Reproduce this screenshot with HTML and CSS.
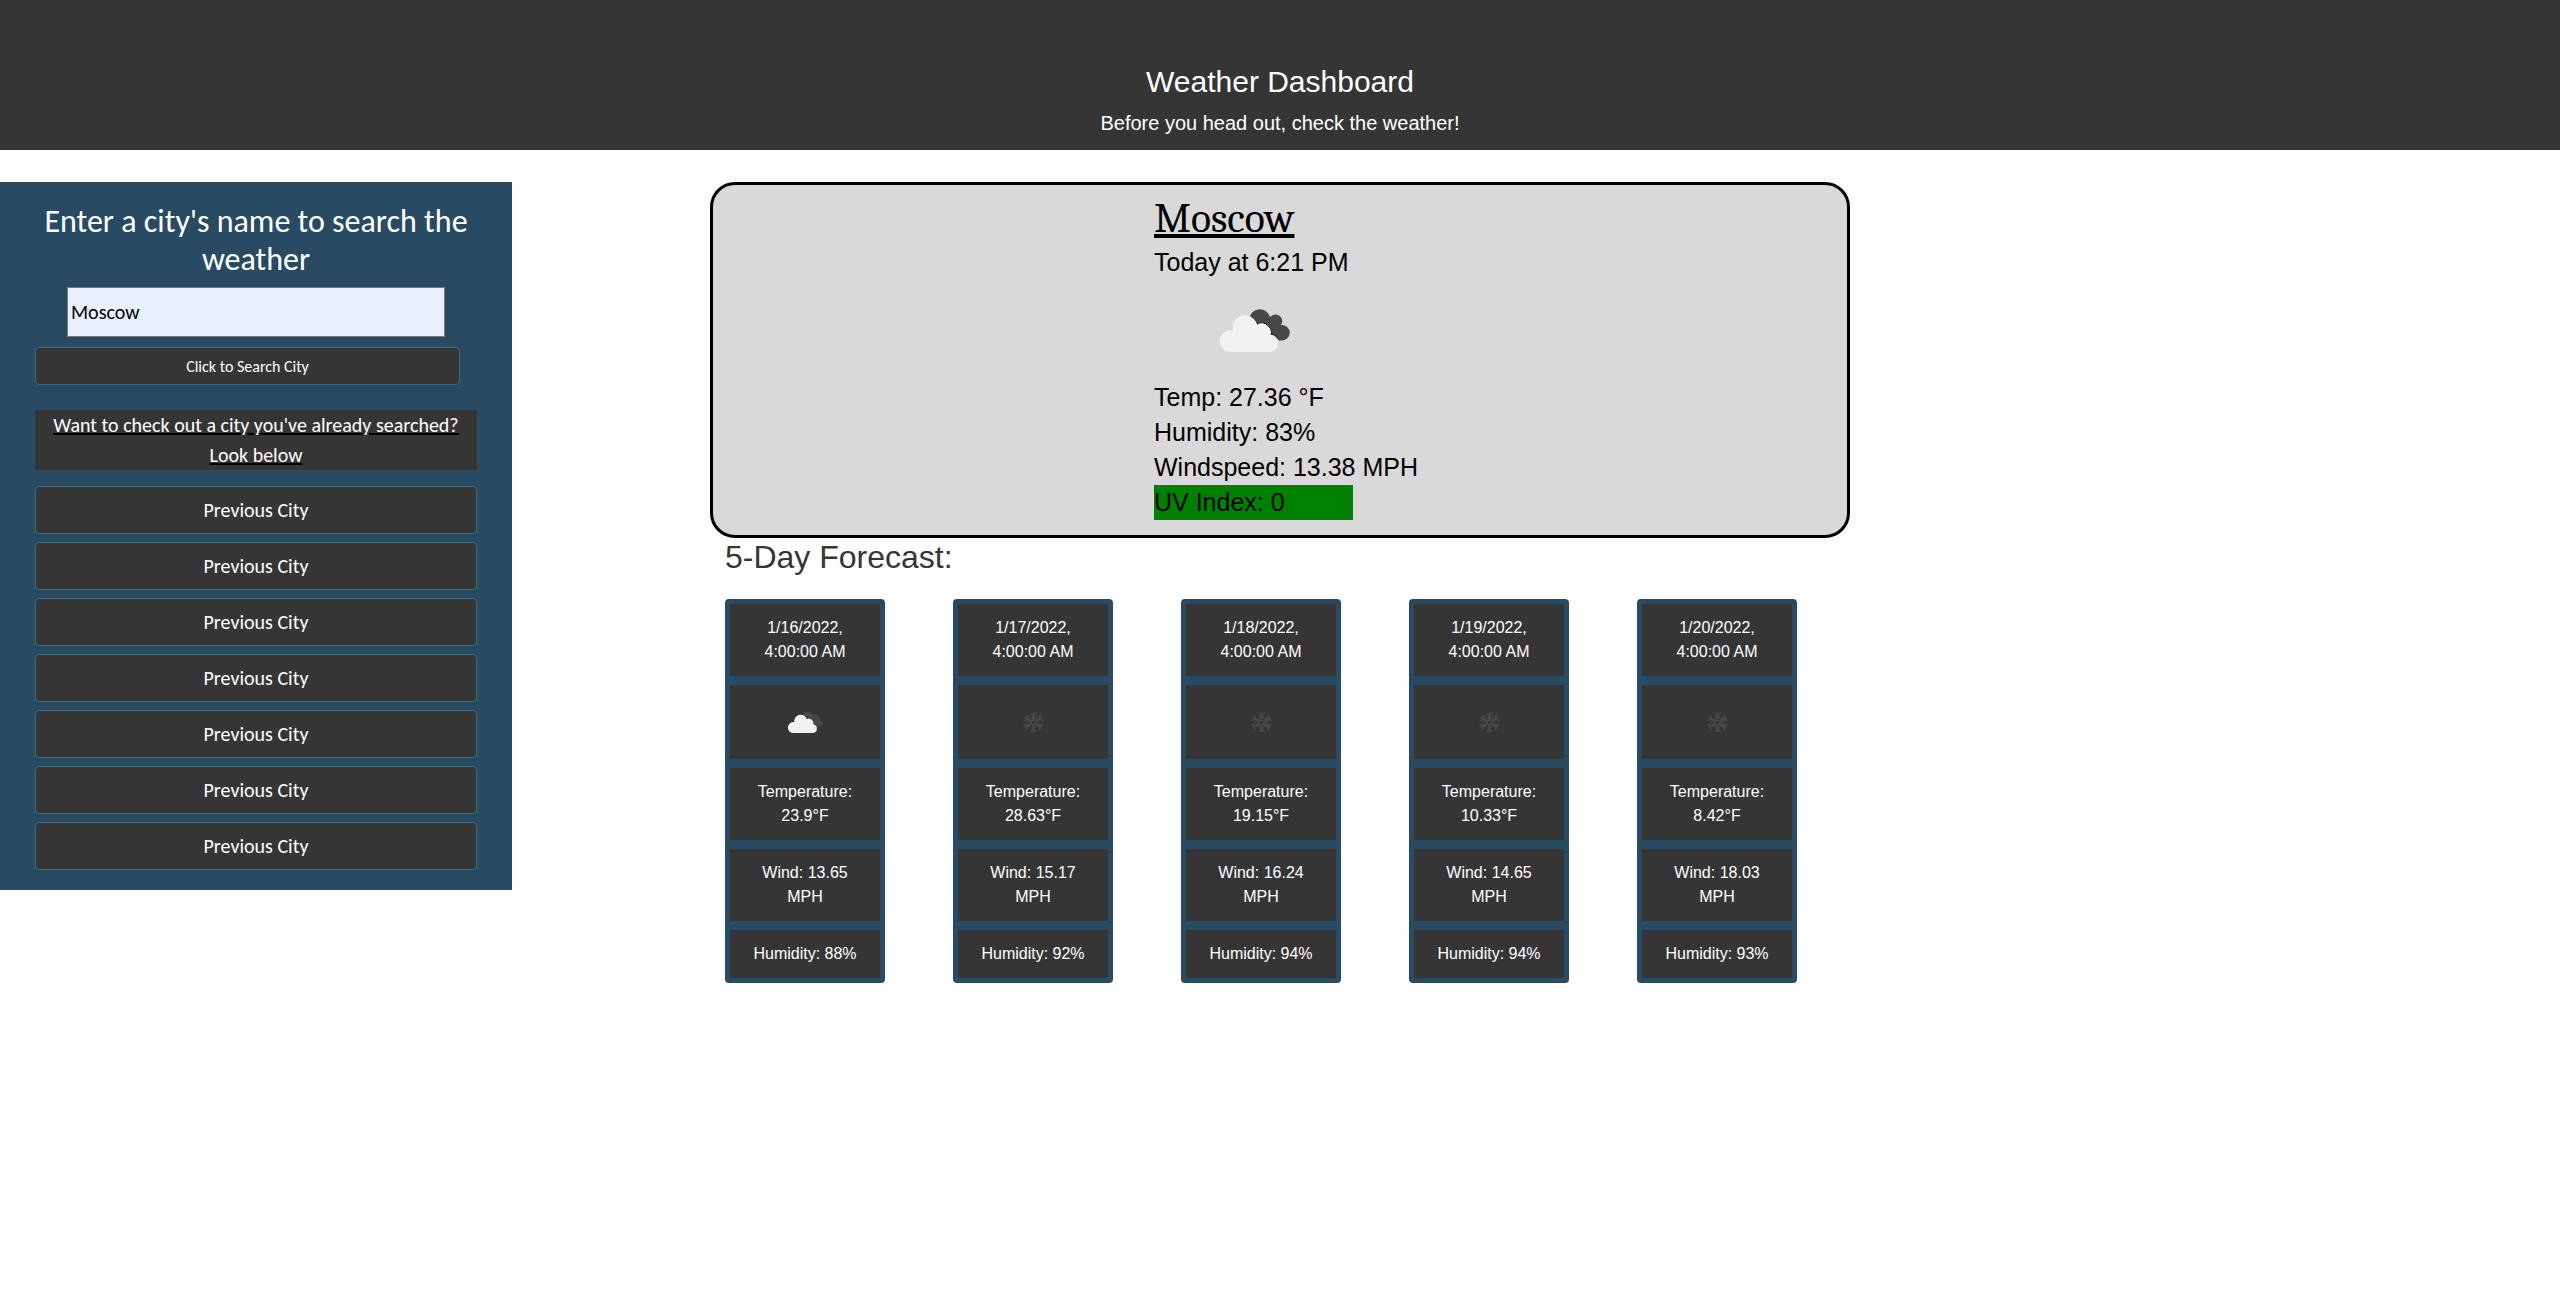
FILE: index.html
```html
<!DOCTYPE html>
<html lang="en">
<head>
<meta charset="utf-8">
<title>Weather Dashboard</title>
<link rel="stylesheet" href="styles.css">
</head>
<body>
<svg class="defs" width="0" height="0" aria-hidden="true">
  <symbol id="clouds" viewBox="0 0 100 100">
    <path class="cloud-back" d="M45.500 39a10.400 10.400 0 0 1 20.500-1.800a6.300 6.300 0 0 1 10.900 8a7.700 7.700 0 1 1 -.2 15.200L60 58z"/>
    <path class="cloud-shade" d="M46.500 36.900a12.500 12.500 0 0 1 7.200 7.800a8.600 8.600 0 0 1 12.900 9.800a8.700 8.700 0 0 1 8.600 6"/>
    <path class="cloud-front" d="M26.700 72a10.900 10.900 0 0 1 0-21.800q1 0 2 .2q-.2-1.200-.2-2.700a12.500 12.500 0 0 1 24.700-2.600a8.600 8.600 0 0 1 12.900 9.800a8.700 8.700 0 0 1 .9 17.100z"/>
    <path class="cloud-rim" d="M46 37.700a12.500 12.500 0 0 1 6.700 7.800a8.600 8.600 0 0 1 12.900 9.800a8.700 8.700 0 0 1 8.600 6"/>
  </symbol>
  <symbol id="snow" viewBox="0 0 50 50">
    <g class="flake">
      <g id="arm"><path d="M25.500 22.500V15M22.300 15.800l3.200 3.200 3.200-3.200M23.400 19.600l2.100 2 2.100-2"/></g>
      <use href="#arm" transform="rotate(60 25.500 25.500)"/>
      <use href="#arm" transform="rotate(120 25.500 25.500)"/>
      <use href="#arm" transform="rotate(180 25.500 25.500)"/>
      <use href="#arm" transform="rotate(240 25.500 25.500)"/>
      <use href="#arm" transform="rotate(300 25.500 25.500)"/>
      <circle cx="25.500" cy="25.500" r="2.600"/>
    </g>
  </symbol>
</svg>

<header class="header">
  <h1 class="header-title">Weather Dashboard</h1>
  <p class="header-tagline">Before you head out, check the weather!</p>
</header>

<main class="layout">
  <aside class="sidebar">
    <h2 class="sidebar-title">Enter a city's name to search the weather</h2>
    <input class="city-input" type="text" value="Moscow" aria-label="City">
    <button class="btn btn-search" type="button">Click to Search City</button>
    <p class="history-title">Want to check out a city you've already searched? Look below</p>
    <div class="history">
      <button class="btn btn-city" type="button">Previous City</button>
      <button class="btn btn-city" type="button">Previous City</button>
      <button class="btn btn-city" type="button">Previous City</button>
      <button class="btn btn-city" type="button">Previous City</button>
      <button class="btn btn-city" type="button">Previous City</button>
      <button class="btn btn-city" type="button">Previous City</button>
      <button class="btn btn-city" type="button">Previous City</button>
    </div>
  </aside>

  <section class="content">
    <article class="current">
      <div class="current-body">
        <h2 class="current-city">Moscow</h2>
        <p>Today at 6:21 PM</p>
        <svg class="current-icon"><use href="#clouds"/></svg>
        <p>Temp: 27.36 °F</p>
        <p>Humidity: 83%</p>
        <p>Windspeed: 13.38 MPH</p>
        <p class="uv">UV Index: 0</p>
      </div>
    </article>

    <h2 class="forecast-title">5-Day Forecast:</h2>
    <div class="forecast">
      <div class="day">
        <p class="cell">1/16/2022, 4:00:00 AM</p>
        <div class="cell"><svg class="day-icon"><use href="#clouds"/></svg></div>
        <p class="cell">Temperature: 23.9°F</p>
        <p class="cell">Wind: 13.65 MPH</p>
        <p class="cell">Humidity: 88%</p>
      </div>
      <div class="day">
        <p class="cell">1/17/2022, 4:00:00 AM</p>
        <div class="cell"><svg class="day-icon"><use href="#snow"/></svg></div>
        <p class="cell">Temperature: 28.63°F</p>
        <p class="cell">Wind: 15.17 MPH</p>
        <p class="cell">Humidity: 92%</p>
      </div>
      <div class="day">
        <p class="cell">1/18/2022, 4:00:00 AM</p>
        <div class="cell"><svg class="day-icon"><use href="#snow"/></svg></div>
        <p class="cell">Temperature: 19.15°F</p>
        <p class="cell">Wind: 16.24 MPH</p>
        <p class="cell">Humidity: 94%</p>
      </div>
      <div class="day">
        <p class="cell">1/19/2022, 4:00:00 AM</p>
        <div class="cell"><svg class="day-icon"><use href="#snow"/></svg></div>
        <p class="cell">Temperature: 10.33°F</p>
        <p class="cell">Wind: 14.65 MPH</p>
        <p class="cell">Humidity: 94%</p>
      </div>
      <div class="day">
        <p class="cell">1/20/2022, 4:00:00 AM</p>
        <div class="cell"><svg class="day-icon"><use href="#snow"/></svg></div>
        <p class="cell">Temperature: 8.42°F</p>
        <p class="cell">Wind: 18.03 MPH</p>
        <p class="cell">Humidity: 93%</p>
      </div>
    </div>
  </section>
</main>
</body>
</html>
```

FILE: styles.css
```css
* { box-sizing: border-box; }

body {
  margin: 0;
  background: #fff;
  font-family: Arial, "Liberation Sans", sans-serif;
  color: #000;
}

h1, h2, p { margin: 0; font-weight: 400; }

.defs { display: block; width: 0; height: 0; }

.header {
  height: 150px;
  padding-top: 64px;
  background: #353535;
  color: #fff;
  text-align: center;
}
.header-title { font-size: 30px; line-height: 36px; margin-bottom: 8px; }
.header-tagline { font-size: 20px; line-height: 30px; }

.layout {
  display: flex;
  align-items: flex-start;
  gap: 198px;
  padding-top: 32px;
}

/* Search panel */
.sidebar {
  display: flex;
  flex-direction: column;
  width: 512px;
  height: 708px;
  padding: 21px 35px 20px;
  background: #284b63;
  color: #fff;
  font-family: Calibri, Carlito, Lato, sans-serif;
  font-size: 20px;
  text-align: center;
}
.sidebar-title { font-size: 32px; line-height: 38px; margin-bottom: 8px; }

.city-input {
  align-self: center;
  width: 378px;
  height: 50px;
  padding: 0 3px;
  border: 1px solid #767676;
  border-radius: 0;
  background: #e8f0fe;
  color: #000;
  font: inherit;
}

.btn {
  display: flex;
  align-items: center;
  justify-content: center;
  padding: 0;
  border: 1px solid #3c6e71;
  border-radius: 4px;
  background: #353535;
  color: #fff;
  font: inherit;
}
.btn-search { width: 425px; height: 38px; margin-top: 10px; font-size: 16px; }
.btn-city { width: 442px; height: 48px; }

.history-title {
  margin: 25px 0 16px;
  background: #353535;
  line-height: 30px;
  text-decoration: underline #000 2px;
}
.history { display: flex; flex-direction: column; gap: 8px; }

/* Current conditions */
.content { width: 1140px; }
.current {
  height: 356px;
  padding: 9px 0 15px 441px;
  border: 3px solid #000;
  border-radius: 25px;
  background: #d9d9d9;
  font-size: 25px;
  line-height: 35px;
}
.current-city {
  width: max-content;
  margin-bottom: 1px;
  font-family: Cambria, Caladea, serif;
  font-size: 41.6px;
  line-height: 50px;
  text-decoration: underline 4px;
  text-underline-offset: 2px;
  text-decoration-skip-ink: none;
}
.current-icon { display: block; width: 100px; height: 100px; margin-left: 50px; }
.uv { width: 199px; background: #008000; }

/* Forecast */
.forecast-title {
  padding-left: 15px;
  color: #353535;
  font-size: 32px;
  line-height: 38px;
}
.forecast { display: flex; gap: 68px; padding: 23px 0 0 15px; }
.day {
  display: flex;
  flex-direction: column;
  gap: 9px;
  width: 160px;
  padding: 5px;
  border-radius: 4px;
  background: #284b63;
  color: #fff;
}
.cell {
  padding: 12px 16px;
  background: #353535;
  font-size: 16px;
  line-height: 24px;
  text-align: center;
}
.day-icon { display: block; width: 50px; height: 50px; margin: 0 auto; }

.cloud-back { fill: #48484a; }
.cloud-front { fill: #f2f2f0; }
.cloud-shade { fill: none; stroke: #2a2a2c; stroke-width: 1; }
.cloud-rim { fill: none; stroke: #fff; stroke-width: 1; }
.flake { fill: none; stroke: #48484a; stroke-width: 1.5; }
```
